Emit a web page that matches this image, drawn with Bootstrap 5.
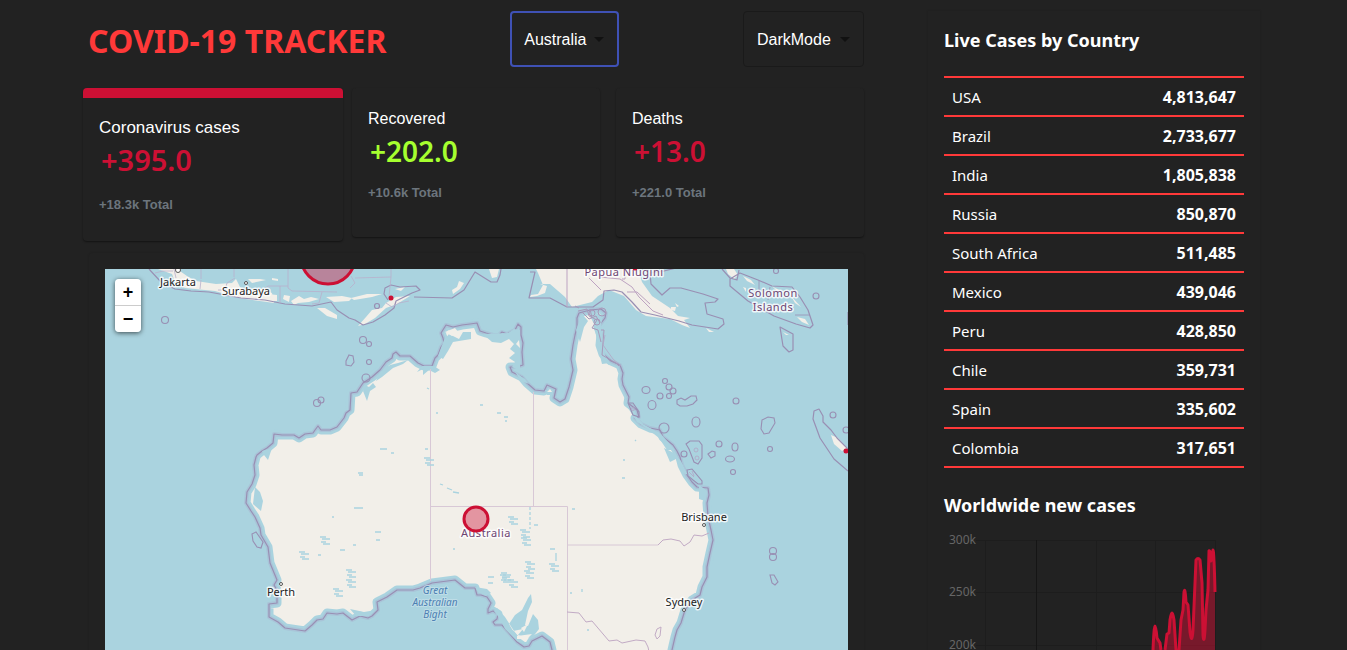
<!DOCTYPE html>
<html lang="en">
<head>
<meta charset="utf-8">
<meta name="viewport" content="width=device-width, initial-scale=1">
<title>COVID-19 Tracker</title>
<link rel="stylesheet" href="https://cdn.jsdelivr.net/npm/bootstrap@5.3.0/dist/css/bootstrap.min.css">
<style>
  body { background: #222; color: #fff; font-family: "Noto Sans", sans-serif; }
  .page { display: grid; grid-template-columns: minmax(0, 781fr) minmax(0, 332fr); gap: 64px; padding: 11px 87px 0 83px; }
  .side-col { padding: 16px 16px 0; box-shadow: 0 0 2px rgba(0,0,0,.15); }
  .brand { color: #ff3939; font-size: 32px; line-height: 40px; font-weight: 700; padding: 10px 0 6px 5px; }
  .picker { height: 56px; padding: 0 12px; border: 1px solid #1a1a1a; border-radius: 4px; color: #fff; font: 16px "Liberation Sans", sans-serif;
    appearance: none; background: #222 url("data:image/svg+xml,%3Csvg xmlns='http://www.w3.org/2000/svg' viewBox='0 0 10 5'%3E%3Cpath fill='%23111' d='M0 0h10L5 5z'/%3E%3C/svg%3E") no-repeat right 13px center / 10px 5px; }
  .picker-country { width: 109px; border: 2px solid #3f51b5; }
  .picker-theme { width: 121px; padding-left: 13px; }
  .stats { display: grid; grid-template-columns: 269fr 256fr 256fr; align-items: start; margin-top: 21px; }
  .stat { background: #222; border-radius: 4px; padding: 21px 16px 0; height: 149px; box-shadow: 0 1px 2px rgba(0,0,0,.45); font-family: "Liberation Sans", sans-serif; }
  .stat-mid { margin-right: 8px; }
  .stat-end { margin-left: 8px; }
  .stat-active { border-top: 10px solid #cc1034; height: 153px; margin-right: 9px; padding-top: 20px; }
  .stat-name { font-size: 16px; line-height: 20px; }
  .stat-active .stat-name { font-size: 17px; }
  .stat-new { font: 600 28px/36px "Noto Sans", sans-serif; color: #cc1034; margin: 4px 0 15px 2px; }
  .stat-active .stat-new { font-size: 29px; margin-bottom: 18px; }
  .stat .stat-good { color: #a6ff2f; }
  .stat-total { font-size: 13px; line-height: 18px; font-weight: 700; color: #6c757d; }
  .map-card { margin: 12px 0 0 6px; padding: 16px 16px 0; border-radius: 4px; box-shadow: 0 0 2px rgba(0,0,0,.2); }
  .map-card svg, .chart { display: block; width: 100%; height: auto; }
  .zoomer { top: 10px; left: 10px; width: 26px; border-radius: 4px; box-shadow: 0 1px 5px rgba(0,0,0,.65); }
  .zoomer button { border: 0; height: 26px; background: #fff; color: #000; font: bold 18px/26px "Liberation Sans", sans-serif; padding: 0; }
  .zoomer button + button { border-top: 1px solid #ccc; height: 27px; }
  .side-title { font-size: 18px; line-height: 26px; font-weight: 700; margin: 0; }
  .cases { margin: 23px 0 24px; border-collapse: collapse; }
  .cases tr { border-top: 2px solid #ff3939; border-bottom: 2px solid #ff3939; }
  .cases td { padding: 0 8px; height: 39px; font-size: 16px; line-height: 24px; vertical-align: middle; }
  .cases .country { font-size: 15px; }
  .town { font: 11px "Noto Sans", sans-serif; fill: #222; }
  .nation { font: 11px "Noto Sans", sans-serif; fill: #6d4673; letter-spacing: .5px; }
  .halo { paint-order: stroke; stroke: #fff; stroke-opacity: .8; stroke-width: 3px; stroke-linejoin: round; text-anchor: middle; }
  .sea-name { font: italic 10px "Noto Sans", sans-serif; fill: #4d80b3; stroke: #c5e1ea; stroke-width: 2px; }
  .axis { font: 12px "Noto Sans", sans-serif; fill: #666; text-anchor: end; }
</style>
</head>
<body>
<div class="page vh-100 overflow-hidden">
  <main>
    <header class="d-flex justify-content-between align-items-start">
      <h1 class="brand m-0">COVID-19 TRACKER</h1>
      <select class="picker picker-country" aria-label="Country"><option>Australia</option></select>
      <select class="picker picker-theme" aria-label="Theme"><option>DarkMode</option></select>
    </header>

    <section class="stats">
      <div class="stat stat-active">
        <div class="stat-name">Coronavirus cases</div>
        <div class="stat-new">+395.0</div>
        <div class="stat-total">+18.3k Total</div>
      </div>
      <div class="stat stat-mid">
        <div class="stat-name">Recovered</div>
        <div class="stat-new stat-good">+202.0</div>
        <div class="stat-total">+10.6k Total</div>
      </div>
      <div class="stat stat-end">
        <div class="stat-name">Deaths</div>
        <div class="stat-new">+13.0</div>
        <div class="stat-total">+221.0 Total</div>
      </div>
    </section>

    <section class="map-card">
      <div class="position-relative">
        <svg viewBox="105 269 743 420" role="img" aria-label="Map of Australia">
          <defs>
            <path id="coast" d="M257 455L262 451 267 448 273 443 274 434 282 435 290 435 294 435 299 438 305 434 313 433 315 430 318 426 321 430 330 430 337 427 344 418 346 413 350 410 351 393 357 392 363 383 372 377 380 370 386 362 392 358 393 354 396 352 400 356 410 356 418 363 424 366 432 366 435 358 438 355 441 347 444 343 443 338 441 333 446 325 453 327 462 325 470 324 477 323 480 331 486 333 493 335 499 335 502 332 507 334 515 330 518 324 521 327 521 335 523 343 522 352 523 365 517 367 510 367 512 372 522 377 527 383 535 390 544 391 547 385 556 389 554 398 560 402 565 399 569 387 573 370 571 359 573 345 575 335 577 327 577 318 579 313 590 310 601 309 606 313 605 318 598 327 601 335 600 345 603 354 611 361 620 365 623 373 622 379 623 385 629 397 628 403 637 410 639 417 635 418 641 424 650 428 660 430 663 437 673 445 677 451 680 457 682 465 687 475 692 482 697 487 708 488 709 495 707 503 708 517 711 530 713 540 710 553 707 567 707 577 702 587 700 595 692 600 685 610 681 623 677 630 675 637 672 650 668 700 552 700 552 650 550 642 542 636 532 641 529 646 524 647 517 642 502 625 495 625 493 622 497 619 498 614 493 611 488 613 488 609 491 603 487 597 481 595 477 595 475 588 465 588 455 580 432 583 420 588 413 590 397 590 387 597 377 602 378 610 372 616 368 618 360 616 352 620 343 613 337 614 327 613 323 619 317 620 312 625 305 631 285 628 278 622 269 617 269 604 277 603 277 590 274 585 277 580 270 563 268 547 261 535 260 528 255 517 251 511 246 503 247 492 252 484 255 475 254 465 256 457Z"/>
            <g id="lake"><path d="M0 0h6M2 2h8M1 5h5M3 7h7"/></g>
          </defs>
          <rect x="105" y="269" width="743" height="440" fill="#aad3df"/>

          <!-- Australia -->
          <use href="#coast" fill="#f2efe9" stroke="#aad3df" stroke-width="9" stroke-linejoin="round"/>
          <use href="#coast" fill="none" stroke="#a9c1d6" stroke-width="4" stroke-linejoin="round" opacity=".8"/>
          <use href="#coast" fill="none" stroke="#998fb3" stroke-width="1.2" stroke-linejoin="round"/>

          <!-- inlets and shallows -->
          <g fill="#aad3df">
            <path d="M262 451l10-3-4 12-4-5zM255 487l5 5 3 9-2 10-8-7zM365 385l4 2 4-4 3 4-6 4-3 10-4-10zM380 372l10-7 8-2 10-3-5 4-10 4-11 9-6 4zM422 366l12 0 6 4-5 3-6-3-6 5 0-6-6 3zM444 340l5-6 10 5 4-7 8 0 0 7-12 2-6 1-5 9-5 8-5-3zM483 334l9 8 9 1 8-4 5 5-4 5 5 4-6 5 6 4-3 5 8 4 0-41-6-1-6 4zM515 372l10 7 4 5-8-3zM545 390l6 1 1 4-5 0zM576 330l6-16 6 7-4 6-4 15zM588 312l6 12 5 28 3 12 8-1-5-8-4-30 2-10zM622 390l6 18 9 14 12 8 10 8 8 12 8 0-14-16-18-10-12-14zM664 448l6 14 6-3 6 14 7 2 10 12 0 12 6 2 2-10-18-14-8-16-7-8z"/>
            <path d="M509 624l6-9 7-5 6-12 3-4 1 8-4 9-3 14 3 1 5-12 5 6 1 9-7 9-8-1-6-2 5-6-10 2zM475 587l12 2 4 4-5 3-8-4zM494 611l6 8 5 10 12 12 8 4-11-14-9-14-8-9zM350 609l14 3 12-2-7 6-13 0z"/>
          </g>
          <path d="M445 332l10-4 4 5-7 3zM521 628l7-4-4 8zM517 636l15-2-5 5-10 0zM516 344l3-4 1 8zM547 392l3-3 2 3z" fill="#f2efe9"/>

          <!-- state borders -->
          <g fill="none" stroke="#d8c8d6" stroke-width="1">
            <path d="M430.500 369V581M430 506.500H567.500V650M533.500 392V506M567 545H658"/>
            <path stroke="#c2abc5" d="M658 545l5-5 8-1 9 2 4 5 6-4 4-7 8 1 7-3M567 612l12 1 7 9 6-1 17 20 8-1 5 3 14-3 9 1 3 6 3 14M657 629l4-2-1 9-3 3-2-4z"/>
          </g>

          <!-- salt lakes -->
          <g stroke="#aad3df" stroke-width="1.300" fill="none">
            <use href="#lake" x="320" y="537"/><use href="#lake" x="299" y="552"/><use href="#lake" x="520" y="530"/><use href="#lake" x="521" y="538"/>
            <use href="#lake" x="525" y="562"/><use href="#lake" x="524" y="571"/><use href="#lake" x="508" y="517"/><use href="#lake" x="549" y="564"/>
            <use href="#lake" x="501" y="573"/><use href="#lake" x="508" y="580"/><use href="#lake" x="424" y="458"/><use href="#lake" x="333" y="589"/>
            <use href="#lake" x="346" y="570"/><use href="#lake" x="500" y="575"/><use href="#lake" x="346" y="580"/>
            <path d="M354 508h9M358 473h5M359 475h4M353 545h3M375 532h6M376 540h4M427 388l2 1M480 405h3M497 413h4M504 417h4M505 421h2M440 484l3 1M447 488l5 2M453 492l6 1M534 525h4M550 549h5M556 553v8M572 509h3M425 449h3M340 550h5M318 555h3M332 517h2M570 593h2M582 589v3M622 478h3M635 440l1 1M488 577h6M488 583h5M453 549h2M380 449h7M391 453h3M436 413h2M623 460h2M587 630h2"/>
            <path d="M530 507v22" stroke-dasharray="3 2"/>
          </g>

          <!-- Indonesia -->
          <g fill="#f2efe9">
            <path d="M158 269l14 5 3 8 10 6 30 3 24 7 28 4 7 1-2-10-10-4-14 1-8-3-4-8-4 4-16 1-20-3-9-5-10-7z"/>
            <path d="M248 279l12 0 6 1-14 3zM272 278l6 1 0 2-6-1zM268 294l9 1 0 6-5 0zM284 295l6 1-1 6-6-3zM291 301l8-5 5 3 7-2 8 2-10 3-11 1-4 2zM326 297l16-1 10 2-3 3-15 1zM317 308l8 0 12 7 0 4-10-3zM351 298l16-4 15 0-10 3-18 3zM386 303l10-6 14-1-13 8-11 4-11 10-10 6-7 2 8-9 6-7 10-2zM395 289l10-2-4 4zM452 290l5-3 2-6 5 2-4 6-7 5zM489 269l10 0-2 8-5 1zM425 281l2 1M438 290l2 1"/>
          </g>
          <g fill="none" stroke="#998fb3" stroke-width="1.200" stroke-linejoin="round">
            <path d="M149 269l12 13 14 7 16 2 18 1 16 3 16 3 24 2 20 4 27 2 19-4 6 8 12 8 6 2 8 5 10-3 12-7 9-7 2-7 16-8 8-3-4-4-16 1-9-2-6 3-1 6 4 6M414 297l38 1 12-8 11-18 16 10 6 0 3-7 1-6"/>
            <path stroke="#b9b0cc" stroke-width=".800" d="M201 269v10M234 269v8M288 269v19l4 3 45 1M288 286l-20 0-8 6M280 286v17M322 292l-3 11 -7 1M355 278l36-1V269M391 277l-2 20M350 288l5-5-4-7M155 273l8-2 10 0M174 269l2 9M201 280l-1 9M235 278l-8 5-2 7-7 0M386 303l6 4 7-4 10-2"/>
            <circle cx="377" cy="306" r="2.500"/>
          </g>

          <!-- New Guinea -->
          <path d="M536 269l2 4 5 12 -5 9 -7 1-1 2 7-1 8-3 2-7-7-2 10 0 15 13 7 10 20-5 6-6 11-6 15 6 12 14 10 6 24 3 12 6 8 3-6-8 6-2-12-2-8-8-18-12-10-14-4-13z" fill="#f2efe9"/>
          <path d="M530 272l5 0-6 26h21l17 9 14 0 12 0 10-7 1-9 10-1 8 2 10 10 9 10 14 3 24 6 13 4 26 4 6-5-1-5-16-5-2-11 10-1 3-3-15-5-22-6-11 0-8 7-11-11-1-11 14-2 12-3" fill="none" stroke="#998fb3" stroke-width="1.200" stroke-linejoin="round"/>
          <path d="M671 307l5 0-1 4-4-1zM675 303l4 3-2 1zM700 304l4 1M706 328l8 4-5 0zM680 297l3 1" fill="#f2efe9"/>
          <path d="M567 269v38M589 278l12 12M600 277l20 2 12 8 7 10 14 14 10 4M622 279l3 0 0-10M627 292h10l13 12" fill="none" stroke="#bda3c1" stroke-width="1"/>
          <g fill="none" stroke="#a899b9" stroke-width="1">
            <path d="M578 311l9-2 2 7 8 4-5 8 6 2 3 12M582 312l7 7 7-3 4 7M590 309l2 9M575 306l4 2M601 330l3 0-2 25 14 8 3 3"/>
            <circle cx="592" cy="313" r="3"/><circle cx="597" cy="322" r="3"/><circle cx="602" cy="312" r="4"/>
          </g>

          <!-- Solomon Islands and New Caledonia -->
          <path d="M726 269h8l4 6-4 4-6-5zM743 276l8 4 4 5-8-4zM760 279l5 2M770 284l5 4 12 5-10-2zM791 296l10 11-6-4zM797 317l8 2 4 6-7-3zM743 287l3 1 0 4M783 332l6 3-3 0zM831 435l7 3 9 10-5 3-8-7z" fill="#f2efe9"/>
          <g fill="none" stroke="#998fb3" stroke-width="1.200" stroke-linejoin="round">
            <path d="M722 269l8 9 7 2 2-10M740 273l18 7 14 6 20 1 8 10 8 13 5 15-3 3-14-4-22-8-26-15-18-15 0-7zM848 471l-14-12-14-21-7-19 1-8 5-2 4 7 0 6 8 8 6 8 11 11M780 327l13 7 0 16-4 2-6-6zM848 312v13"/>
            <path d="M759 281v12M770 287l-2 13M795 315l15 0" stroke-width=".800"/>
          </g>

          <!-- reefs and islets -->
          <g fill="none" stroke="#998fb3" stroke-width="1.100">
            <circle cx="165" cy="320" r="3.500"/><circle cx="363" cy="340" r="3.500"/><circle cx="369" cy="344" r="2.500"/><circle cx="369" cy="362" r="2.500"/>
            <circle cx="317" cy="403" r="3.500"/><circle cx="321" cy="400" r="3"/><path d="M349 355l4 1 1 6-3 4-5-1 0-4z"/><circle cx="366" cy="378" r="4"/><circle cx="776" cy="271" r="2.500"/><circle cx="816" cy="296" r="3"/>
            <ellipse cx="646" cy="390" rx="4" ry="3.500"/><circle cx="665" cy="381" r="2.500"/><circle cx="669" cy="387" r="3"/><circle cx="673" cy="391" r="3"/><circle cx="669" cy="396" r="2.500"/><circle cx="660" cy="396" r="3"/><ellipse cx="652" cy="405" rx="4" ry="4.500"/>
            <path d="M677 400l4-2 4 2 6-4 5 0 1 4-4 4-6 2-7 0-3-2zM762 420l6-3 6 1 1 5-6 10-5 1-3-5z"/>
            <circle cx="736" cy="401" r="3"/><ellipse cx="696" cy="422" rx="4" ry="5"/><circle cx="664" cy="428" r="5"/><circle cx="719" cy="444" r="3"/><ellipse cx="735" cy="447" rx="3" ry="4"/><circle cx="770" cy="449" r="2.500"/><circle cx="833" cy="415" r="3"/><circle cx="846" cy="430" r="3"/>
            <path d="M686 444l4-3 9 0 3 4 0 13-4 6-4-2-5-13zM708 454l4-3 3 1 0 4-4 2zM628 403l5 0 6 9 0 5-6-2zM687 470l5-1 10 12 0 3-4 0-10-8zM252 534l4-2 7 10-2 6-4-1-4-6z"/>
            <circle cx="684" cy="454" r="3"/><ellipse cx="730" cy="459" rx="4.500" ry="3"/><circle cx="733" cy="472" r="2.500"/><circle cx="773" cy="551" r="3.500"/><circle cx="773" cy="557" r="3.500"/><path d="M770 575l4 0 4 7-3 3-3-2z"/>
          </g>
          <g fill="none" stroke="#b3a6c5" stroke-width=".800"><circle cx="633" cy="409" r="1.500"/><circle cx="696" cy="450" r="2"/><circle cx="697" cy="458" r="2"/><path d="M689 472l5 5M692 471l2 5M605 335l-2 10 10 14 8 7"/></g>

          <!-- towns -->
          <g fill="#fff" stroke="#555" stroke-width="1"><circle cx="178" cy="270" r="2.500"/><circle cx="246" cy="283" r="1.500"/><circle cx="281" cy="584" r="1.500"/><circle cx="704" cy="525" r="1.500"/><circle cx="684" cy="610" r="1.500"/></g>
          <text class="town halo" x="178" y="286">Jakarta</text>
          <text class="town halo" x="246" y="295">Surabaya</text>
          <text class="town halo" x="281" y="596">Perth</text>
          <text class="town halo" x="704" y="521">Brisbane</text>
          <text class="town halo" x="684" y="606">Sydney</text>
          <text class="nation halo" x="624" y="276">Papua Niugini</text>
          <text class="nation halo" x="773" y="297">Solomon</text>
          <text class="nation halo" x="773" y="311">Islands</text>
          <text class="nation halo" x="486" y="537">Australia</text>
          <text class="halo sea-name" x="435" y="594">Great</text>
          <text class="halo sea-name" x="435" y="606">Australian</text>
          <text class="halo sea-name" x="435" y="618">Bight</text>

          <!-- case markers -->
          <g fill="#cc1034" fill-opacity=".4" stroke="#cc1034" stroke-width="3"><circle cx="328" cy="257" r="27"/><circle cx="476" cy="519" r="12"/></g>
          <g fill="#cc1034"><circle cx="391" cy="298" r="2.500"/><circle cx="846" cy="451" r="2.500"/><circle cx="635" cy="268" r="2.500"/></g>
        </svg>
        <div class="zoomer position-absolute d-flex flex-column overflow-hidden">
          <button type="button" aria-label="Zoom in">+</button>
          <button type="button" aria-label="Zoom out">−</button>
        </div>
      </div>
    </section>
  </main>

  <aside class="side-col">
    <h2 class="side-title">Live Cases by Country</h2>
    <table class="cases w-100">
      <tbody>
        <tr><td class="country">USA</td><td class="text-end fw-bold">4,813,647</td></tr>
        <tr><td class="country">Brazil</td><td class="text-end fw-bold">2,733,677</td></tr>
        <tr><td class="country">India</td><td class="text-end fw-bold">1,805,838</td></tr>
        <tr><td class="country">Russia</td><td class="text-end fw-bold">850,870</td></tr>
        <tr><td class="country">South Africa</td><td class="text-end fw-bold">511,485</td></tr>
        <tr><td class="country">Mexico</td><td class="text-end fw-bold">439,046</td></tr>
        <tr><td class="country">Peru</td><td class="text-end fw-bold">428,850</td></tr>
        <tr><td class="country">Chile</td><td class="text-end fw-bold">359,731</td></tr>
        <tr><td class="country">Spain</td><td class="text-end fw-bold">335,602</td></tr>
        <tr><td class="country">Colombia</td><td class="text-end fw-bold">317,651</td></tr>
      </tbody>
    </table>
    <h2 class="side-title">Worldwide new cases</h2>
    <svg class="chart mt-3" viewBox="944 534 300 150" role="img" aria-label="Worldwide new cases over time">
      <g stroke="#1d1d1d" stroke-width="1"><path d="M976 540.500H1215.500M976 592.500H1215.500M976 645.500H1215.500M985.500 540V684M1096.500 540V684M1155.500 540V684M1215.500 540V684"/><path stroke="#151515" d="M1036.500 540V684"/></g>
      <text class="axis" x="976" y="544">300k</text>
      <text class="axis" x="976" y="596">250k</text>
      <text class="axis" x="976" y="649">200k</text>
      <path d="M1150 690L1153 650Q1154 626 1155 626T1157 638L1160 643 1161 650 1163 662 1165 650 1167 634 1169 633 1170 620Q1172 606 1174 620L1176 650 1178 656 1179 650 1181 620 1183 610 1184 592Q1185 586 1186 602L1188 605 1190 632Q1192 646 1193 630L1196 560Q1198 557 1200 560L1202 583 1203 635Q1204 646 1205 630L1206 610 1208 590 1209 551Q1210 549 1211 561L1213 550Q1214 550 1215 592V690Z" fill="#cc1034" fill-opacity=".5"/>
      <path d="M1150 690L1153 650Q1154 626 1155 626T1157 638L1160 643 1161 650 1163 662 1165 650 1167 634 1169 633 1170 620Q1172 606 1174 620L1176 650 1178 656 1179 650 1181 620 1183 610 1184 592Q1185 586 1186 602L1188 605 1190 632Q1192 646 1193 630L1196 560Q1198 557 1200 560L1202 583 1203 635Q1204 646 1205 630L1206 610 1208 590 1209 551Q1210 549 1211 561L1213 550Q1214 550 1215 592" fill="none" stroke="#cc1034" stroke-width="3" stroke-linejoin="round"/>
    </svg>
  </aside>
</div>
<script src="https://cdn.jsdelivr.net/npm/bootstrap@5.3.0/dist/js/bootstrap.bundle.min.js"></script>
</body>
</html>
